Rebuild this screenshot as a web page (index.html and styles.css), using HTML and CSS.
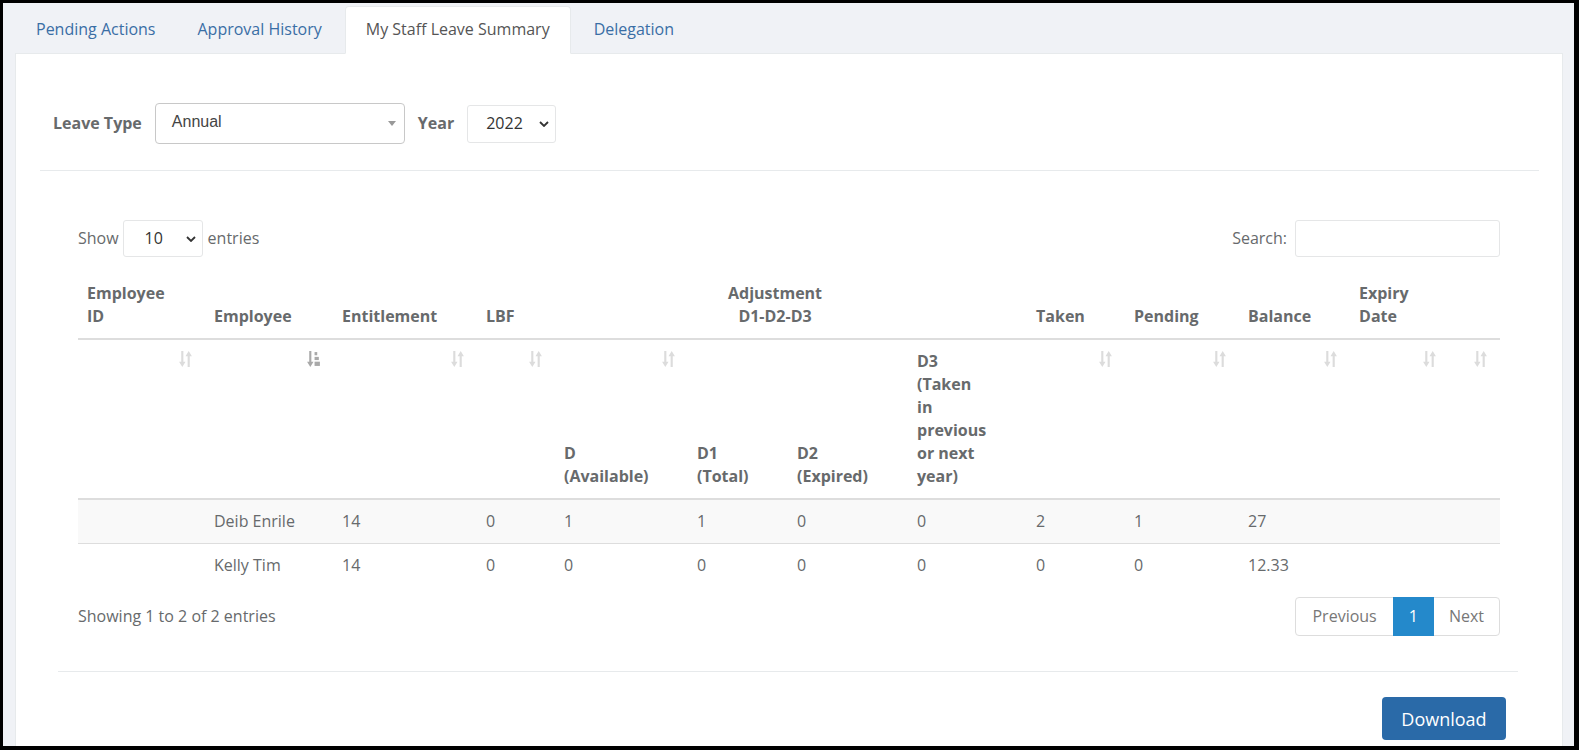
FILE: index.html
```html
<!DOCTYPE html>
<html lang="en">

<head>
    <meta charset="UTF-8">
    <meta name="viewport" content="width=device-width, initial-scale=1.0">
    <title>My Staff Leave Summary</title>
    <link rel="stylesheet" href="styles.css">
</head>

<body>
    <div class="frame">
        <ul class="tabs">
            <li><a href="#">Pending Actions</a></li>
            <li><a href="#">Approval History</a></li>
            <li class="active"><a href="#">My Staff Leave Summary</a></li>
            <li><a href="#">Delegation</a></li>
        </ul>

        <div class="panel">
            <div class="filters">
                <label>Leave Type</label>
                <div class="picker picker-type">
                    <span>Annual</span>
                    <svg class="caret" width="8" height="5" viewBox="0 0 8 5"><path d="M0 0h8L4 5z" /></svg>
                </div>
                <label>Year</label>
                <div class="picker picker-year">
                    <span>2022</span>
                    <svg class="chevron" width="10" height="6" viewBox="0 0 10 6"><path d="M1 1l4 4 4-4" /></svg>
                </div>
            </div>

            <hr class="rule">

            <div class="dt">
                <div class="dt-top">
                    <div class="dt-length">
                        Show
                        <div class="picker picker-len">
                            <span>10</span>
                            <svg class="chevron" width="10" height="6" viewBox="0 0 10 6"><path d="M1 1l4 4 4-4" /></svg>
                        </div>
                        entries
                    </div>
                    <div class="dt-search">
                        <label for="search">Search:</label>
                        <input type="search" id="search">
                    </div>
                </div>

                <table class="summary">
                    <colgroup>
                        <col class="c-id"><col class="c-emp"><col class="c-ent"><col class="c-lbf">
                        <col class="c-d"><col class="c-d1"><col class="c-d2"><col class="c-d3">
                        <col class="c-taken"><col class="c-pend"><col class="c-bal"><col class="c-exp"><col class="c-end">
                    </colgroup>
                    <thead>
                        <tr class="head-top">
                            <th>Employee<br>ID</th>
                            <th>Employee</th>
                            <th>Entitlement</th>
                            <th>LBF</th>
                            <th colspan="4" class="adjust">Adjustment<br>D1-D2-D3</th>
                            <th>Taken</th>
                            <th>Pending</th>
                            <th>Balance</th>
                            <th>Expiry<br>Date</th>
                            <th></th>
                        </tr>
                        <tr class="head-sub">
                            <th class="sortable"><svg class="sort"><use href="#sort-both" /></svg></th>
                            <th class="sortable"><svg class="sort sort-asc"><use href="#sort-asc" /></svg></th>
                            <th class="sortable"><svg class="sort"><use href="#sort-both" /></svg></th>
                            <th class="sortable"><svg class="sort"><use href="#sort-both" /></svg></th>
                            <th class="sortable">D<br>(Available)<svg class="sort"><use href="#sort-both" /></svg></th>
                            <th>D1<br>(Total)</th>
                            <th>D2<br>(Expired)</th>
                            <th>D3<br>(Taken<br>in<br>previous<br>or next<br>year)</th>
                            <th class="sortable"><svg class="sort"><use href="#sort-both" /></svg></th>
                            <th class="sortable"><svg class="sort"><use href="#sort-both" /></svg></th>
                            <th class="sortable"><svg class="sort"><use href="#sort-both" /></svg></th>
                            <th class="sortable"><svg class="sort"><use href="#sort-both" /></svg></th>
                            <th class="sortable"><svg class="sort"><use href="#sort-both" /></svg></th>
                        </tr>
                    </thead>
                    <tbody>
                        <tr class="odd">
                            <td></td><td>Deib Enrile</td><td>14</td><td>0</td>
                            <td>1</td><td>1</td><td>0</td><td>0</td>
                            <td>2</td><td>1</td><td>27</td><td></td><td></td>
                        </tr>
                        <tr>
                            <td></td><td>Kelly Tim</td><td>14</td><td>0</td>
                            <td>0</td><td>0</td><td>0</td><td>0</td>
                            <td>0</td><td>0</td><td>12.33</td><td></td><td></td>
                        </tr>
                    </tbody>
                </table>

                <div class="dt-bottom">
                    <div class="dt-info">Showing 1 to 2 of 2 entries</div>
                    <ul class="pager">
                        <li class="disabled"><a href="#">Previous</a></li>
                        <li class="current"><a href="#">1</a></li>
                        <li class="disabled"><a href="#">Next</a></li>
                    </ul>
                </div>
            </div>

            <hr class="rule rule-foot">

            <div class="actions">
                <button type="button" class="btn-download">Download</button>
            </div>
        </div>
    </div>

    <!-- sort glyphs shared by the header cells -->
    <svg width="0" height="0" class="defs">
        <symbol id="sort-both" viewBox="0 0 12 15">
            <path d="M2 0h2v10h2l-3 5-3-5h2z M8 15h2V5h2L9 0 6 5h2z" />
        </symbol>
        <symbol id="sort-asc" viewBox="0 0 12 15">
            <path d="M2 0h2v10h2l-3 5-3-5h2z" />
            <rect x="7" y="1" width="2.5" height="3" />
            <rect x="7" y="5.5" width="4" height="3" />
            <rect x="7" y="10" width="5" height="4" />
        </symbol>
    </svg>
</body>

</html>
```

FILE: styles.css
```css
html {
    background-color: #000;
}

body {
    margin: 0;
    padding: 0;
    font-family: "Open Sans", "Noto Sans", sans-serif;
    font-size: 16px;
    line-height: 1.42857;
    color: #676a6c;
}

.frame {
    margin: 3px 5px 0 3px;
    height: 743px;
    overflow: hidden;
    padding: 0 11px 0 12px;
    background-color: #f0f2f6;
}

/* tabs */

.tabs {
    list-style: none;
    display: flex;
    margin: 0 0 -1px 0;
    padding: 3px 0 0 0;
    position: relative;
    z-index: 1;
}

.tabs li a {
    display: block;
    padding: 11px 20px 12px;
    margin-right: 2px;
    line-height: 23px;
    color: #3a6ea5;
    text-decoration: none;
    border: 1px solid transparent;
    border-radius: 4px 4px 0 0;
}

.tabs li:first-child a {
    margin-right: 0;
}

.tabs li.active a {
    color: #555;
    background-color: #fff;
    border-color: #e7eaec;
    border-bottom-color: #fff;
}

.panel {
    background-color: #fff;
    border: 1px solid #e7eaec;
    padding: 49px 23px 40px 24px;
    min-height: 800px;
}

/* filters */

.filters {
    display: flex;
    align-items: center;
    gap: 13px;
    padding-left: 13px;
    height: 41px;
}

.filters label {
    font-weight: bold;
}

.picker {
    display: flex;
    align-items: center;
    justify-content: space-between;
    box-sizing: border-box;
    background-color: #fff;
    border: 1px solid #e5e6e7;
    border-radius: 3px;
}

.picker-type {
    width: 250px;
    height: 41px;
    padding: 0 8px 0 16px;
    border-color: #c8c8c8;
    border-radius: 4px;
    font-family: "Liberation Sans", Arial, sans-serif;
    color: #444;
    margin-top: -1px;
}

.picker-type span {
    margin-top: -1px;
}

.caret {
    fill: #999;
}

.picker-year {
    width: 89px;
    height: 38px;
    padding: 0 6px 0 18px;
    color: #333;
}

.chevron {
    fill: none;
    stroke: #333;
    stroke-width: 1.8;
}

.rule {
    border: 0;
    border-top: 1px solid #e7eaec;
    margin: 26px 0 0 0;
}

/* data table */

.dt {
    margin: 49px 39px 0 38px;
}

.dt-top {
    display: flex;
    justify-content: space-between;
    align-items: center;
    height: 37px;
}

.dt-length {
    display: flex;
    align-items: center;
}

.picker-len {
    width: 80px;
    height: 37px;
    margin: 0 5px 0 4px;
    padding: 0 6px 0 21px;
    color: #333;
}

.dt-search {
    display: flex;
    align-items: center;
    gap: 8px;
}

.dt-search input {
    width: 205px;
    height: 37px;
    box-sizing: border-box;
    border: 1px solid #e5e6e7;
    border-radius: 3px;
    outline: none;
}

.summary {
    width: 100%;
    margin-top: 14px;
    border-collapse: collapse;
    table-layout: fixed;
}

.c-id { width: 127px; }
.c-emp { width: 128px; }
.c-ent { width: 144px; }
.c-lbf { width: 78px; }
.c-d { width: 133px; }
.c-d1 { width: 100px; }
.c-d2 { width: 120px; }
.c-d3 { width: 119px; }
.c-taken { width: 98px; }
.c-pend { width: 114px; }
.c-bal { width: 111px; }
.c-exp { width: 99px; }
.c-end { width: 51px; }

.summary th,
.summary td {
    padding: 10px 9px;
    line-height: 23px;
    text-align: left;
    vertical-align: bottom;
    white-space: nowrap;
}

.summary th {
    font-weight: bold;
    border-bottom: 2px solid #ddd;
}

.summary .head-top th {
    padding-top: 11px;
}

.summary th.adjust {
    text-align: center;
    padding-right: 41px;
}

.summary th.sortable {
    position: relative;
}

.sort {
    position: absolute;
    top: 11px;
    right: 13px;
    width: 13px;
    height: 16px;
    fill: #dcdcdc;
}

.sort.sort-asc {
    fill: #a9a9a9;
}

.summary td {
    border-top: 1px solid #ddd;
}

.summary tbody tr:first-child td {
    border-top: 0;
}

.summary tr.odd td {
    background-color: #f9f9f9;
}

.dt-bottom {
    display: flex;
    justify-content: space-between;
    align-items: center;
    margin-top: 10px;
}

.pager {
    list-style: none;
    display: flex;
    margin: 0;
    padding: 0;
}

.pager li a {
    display: block;
    height: 39px;
    box-sizing: border-box;
    padding: 0 15px;
    line-height: 37px;
    color: #777;
    text-decoration: none;
    border: 1px solid #ddd;
    margin-left: -1px;
}

.pager li:first-child a {
    border-radius: 4px 0 0 4px;
    margin-left: 0;
    padding: 0 16px;
}

.pager li:last-child a {
    border-radius: 0 4px 4px 0;
}

.pager li.current a {
    background-color: #2489cb;
    border-color: #2489cb;
    color: #fff;
    position: relative;
}

.rule-foot {
    margin: 35px 21px 0 18px;
}

.actions {
    display: flex;
    justify-content: flex-end;
    margin: 25px 33px 0 0;
}

.btn-download {
    width: 124px;
    height: 43px;
    font-family: "Open Sans", sans-serif;
    font-size: 18px;
    color: #fff;
    background-color: #2a6aa8;
    border: none;
    border-radius: 4px;
    cursor: pointer;
}

.defs {
    position: absolute;
}
```
